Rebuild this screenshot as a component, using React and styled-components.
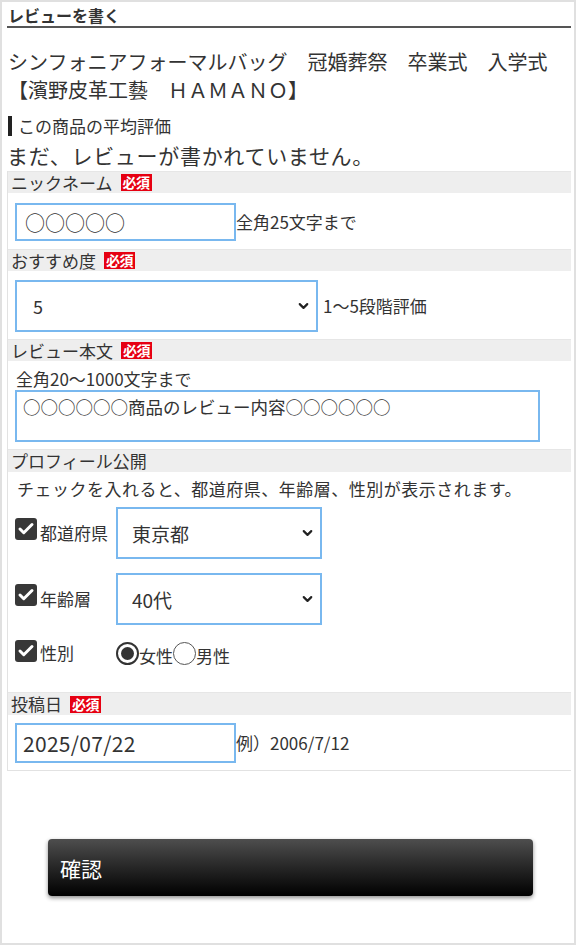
import React from 'react';
import styled, { createGlobalStyle } from 'styled-components';
import { Check, ChevronDown } from 'lucide-react';

const GlobalStyle = createGlobalStyle`
  html, body {
    margin: 0;
    padding: 0;
    background: #fff;
  }
  body {
    font-family: "Noto Sans CJK JP", "Noto Sans", sans-serif;
    color: #333;
  }
  * {
    box-sizing: border-box;
  }
`;

const Page = styled.div`
  width: 576px;
  height: 945px;
  border: 2px solid #e0e0e0;
  padding: 0 3px 0 5px;
  background: #fff;
`;

const Heading = styled.h2`
  margin: 0;
  padding: 3px 1px 1px;
  font-size: 16px;
  font-weight: bold;
  line-height: 20px;
  color: #333;
  border-bottom: 2px solid #555;
`;

const Title = styled.h1`
  margin: 20px 0 0 1px;
  font-size: 20px;
  font-weight: normal;
  line-height: 28px;
  color: #333;
`;

const SubHeading = styled.h3`
  margin: 12px 0 0 1px;
  padding-left: 6px;
  border-left: 4px solid #222;
  font-size: 17px;
  font-weight: normal;
  line-height: 20px;
  color: #333;
`;

const Notice = styled.p`
  margin: 4px 0 0 0;
  font-size: 21px;
  letter-spacing: 0.7px;
  line-height: 30px;
  color: #333;
`;

const Table = styled.div`
  margin-top: 1px;
  border-left: 1px solid #e2e2e2;
  border-bottom: 1px solid #e2e2e2;
`;

const SectionHeader = styled.div`
  display: flex;
  align-items: center;
  height: ${({ tall }) => (tall ? '23px' : '22px')};
  padding-left: 3px;
  background: #eeeeee;
  border-top: 1px solid #e6e6e6;
  font-size: 17px;
  line-height: 20px;
  color: #333;
`;

const Required = styled.span`
  display: inline-block;
  margin-left: 8px;
  padding: 0 2px;
  background: #e60012;
  color: #fff;
  font-size: 14px;
  font-weight: bold;
  line-height: 17px;
  letter-spacing: -0.5px;
`;

const Row = styled.div`
  display: flex;
  align-items: center;
  padding: ${({ pad }) => pad || '9px 7px 8px'};
`;

const Block = styled.div`
  padding: ${({ pad }) => pad || '8px 7px'};
`;

const TextInput = styled.input`
  width: ${({ w }) => w}px;
  height: ${({ h }) => h}px;
  padding: 0 ${({ px }) => px || 8}px;
  border: 2px solid #79b8ef;
  border-radius: 0;
  outline: none;
  background: #fff;
  color: #333;
  font-family: inherit;
  font-size: ${({ fs }) => fs || 20}px;
  letter-spacing: ${({ ls }) => ls || 0}px;
`;

const TextArea = styled.textarea`
  display: block;
  width: 525px;
  height: 52px;
  padding: 3px 6px;
  border: 2px solid #79b8ef;
  outline: none;
  resize: none;
  color: #333;
  font-family: inherit;
  font-size: 17.5px;
  line-height: 24px;
`;

const SelectWrap = styled.div`
  position: relative;
  width: ${({ w }) => w}px;
  height: 52px;
  flex-shrink: 0;
`;

const Select = styled.select`
  appearance: none;
  width: 100%;
  height: 100%;
  padding: 0 30px 0 ${({ pl }) => pl || 16}px;
  border: 2px solid #79b8ef;
  border-radius: 0;
  outline: none;
  background: #fff;
  color: #333;
  font-family: inherit;
  font-size: ${({ fs }) => fs || 18}px;
`;

const Chevron = styled.span`
  position: absolute;
  right: 7px;
  top: 50%;
  transform: translateY(-50%);
  display: flex;
  pointer-events: none;
  color: #222;
`;

const Hint = styled.span`
  margin-left: ${({ ml }) => ml || 0}px;
  font-size: 17px;
  line-height: 22px;
  color: #333;
  white-space: nowrap;
`;

const Description = styled.div`
  font-size: 17px;
  letter-spacing: ${({ ls }) => ls || 0}px;
  line-height: 22px;
  color: #333;
  padding-left: ${({ pl }) => pl || 0}px;
`;

const CheckRow = styled.div`
  display: flex;
  align-items: center;
  margin-top: ${({ mt }) => mt}px;
`;

const CheckLabel = styled.label`
  display: flex;
  align-items: center;
  width: 101px;
  flex-shrink: 0;
  font-size: 17px;
  line-height: 22px;
  color: #333;
`;

const CheckBox = styled.span`
  display: inline-flex;
  align-items: center;
  justify-content: center;
  width: 22px;
  height: 22px;
  margin-right: 3px;
  margin-bottom: ${({ lift }) => lift || 0}px;
  border-radius: 3px;
  background: #383838;
  color: #fff;
`;

const RadioGroup = styled.div`
  display: flex;
  align-items: center;
`;

const Radio = styled.span`
  display: inline-flex;
  align-items: center;
  justify-content: center;
  width: 23px;
  height: 23px;
  border-radius: 50%;
  border: ${({ checked }) => (checked ? '2px solid #333' : '1.5px solid #555')};
  background: #fff;

  &::after {
    content: '';
    display: ${({ checked }) => (checked ? 'block' : 'none')};
    width: 13px;
    height: 13px;
    border-radius: 50%;
    background: #333;
  }
`;

const RadioText = styled.span`
  margin-top: 6px;
  font-size: 17px;
  line-height: 22px;
  color: #333;
`;

const ButtonArea = styled.div`
  padding: 68px 38px 0 41px;
`;

const SubmitButton = styled.button`
  display: block;
  width: 485px;
  height: 57px;
  padding: 0 12px;
  border: none;
  border-radius: 4px;
  background: linear-gradient(to bottom, #4e4e4e 0%, #2a2a2a 45%, #000 100%);
  box-shadow: 0 2px 4px rgba(0, 0, 0, 0.45);
  color: #fff;
  font-family: inherit;
  font-size: 21px;
  text-align: left;
  cursor: pointer;
`;

const Checked = ({ lift }) => (
  <CheckBox lift={ lift }>
    <Check size={ 18 } strokeWidth={ 4 }/>
  </CheckBox>
);

const DropDown = ({ width, value, options, pl, fs }) => (
  <SelectWrap w={ width }>
    <Select defaultValue={ value } pl={ pl } fs={ fs }>
      {options.map(o => <option key={ o } value={ o }>{o}</option>)}
    </Select>
    <Chevron><ChevronDown size={ 15 } strokeWidth={ 3.5 }/></Chevron>
  </SelectWrap>
);

const App = () => (
  <>
    <GlobalStyle/>
    <Page>
      <Heading>レビューを書く</Heading>
      <Title>
        シンフォニアフォーマルバッグ　冠婚葬祭　卒業式　入学式<br/>
        【濱野皮革工藝　ＨＡＭＡＮＯ】
      </Title>
      <SubHeading>この商品の平均評価</SubHeading>
      <Notice>まだ、レビューが書かれていません。</Notice>

      <Table>
        <SectionHeader>ニックネーム<Required>必須</Required></SectionHeader>
        <Row pad='10px 7px 8px'>
          <TextInput w={ 221 } h={ 38 } px={ 8 } defaultValue='○○○○○'/>
          <Hint>全角25文字まで</Hint>
        </Row>

        <SectionHeader>おすすめ度<Required>必須</Required></SectionHeader>
        <Row pad='9px 7px 7px'>
          <DropDown width={ 303 } value='5' options={ ['5', '4', '3', '2', '1'] }/>
          <Hint ml={ 5 }>1〜5段階評価</Hint>
        </Row>

        <SectionHeader>レビュー本文<Required>必須</Required></SectionHeader>
        <Block pad='7px 7px 7px'>
          <Description pl={ 1 }>全角20〜1000文字まで</Description>
          <TextArea defaultValue='○○○○○○商品のレビュー内容○○○○○○'/>
        </Block>

        <SectionHeader tall>プロフィール公開</SectionHeader>
        <Block pad='6px 7px 25px'>
          <Description pl={ 2 } ls={ 0.5 }>チェックを入れると、都道府県、年齢層、性別が表示されます。</Description>
          <CheckRow mt={ 7 }>
            <CheckLabel><Checked lift={ 8 }/>都道府県</CheckLabel>
            <DropDown width={ 206 } value='東京都' pl={ 14 } fs={ 19 } options={ ['東京都', '大阪府', '北海道'] }/>
          </CheckRow>
          <CheckRow mt={ 14 }>
            <CheckLabel><Checked lift={ 8 }/>年齢層</CheckLabel>
            <DropDown width={ 206 } value='40代' pl={ 14 } fs={ 19 } options={ ['20代', '30代', '40代', '50代'] }/>
          </CheckRow>
          <CheckRow mt={ 14 }>
            <CheckLabel><Checked lift={ 4 }/>性別</CheckLabel>
            <RadioGroup>
              <Radio checked/>
              <RadioText>女性</RadioText>
              <Radio/>
              <RadioText>男性</RadioText>
            </RadioGroup>
          </CheckRow>
        </Block>

        <SectionHeader tall>投稿日<Required>必須</Required></SectionHeader>
        <Row pad='8px 7px 7px'>
          <TextInput w={ 221 } h={ 40 } px={ 6 } fs={ 21 } ls={ 0.3 } defaultValue='2025/07/22'/>
          <Hint>例）2006/7/12</Hint>
        </Row>
      </Table>

      <ButtonArea>
        <SubmitButton type='button'>確認</SubmitButton>
      </ButtonArea>
    </Page>
  </>
);

export default App;
